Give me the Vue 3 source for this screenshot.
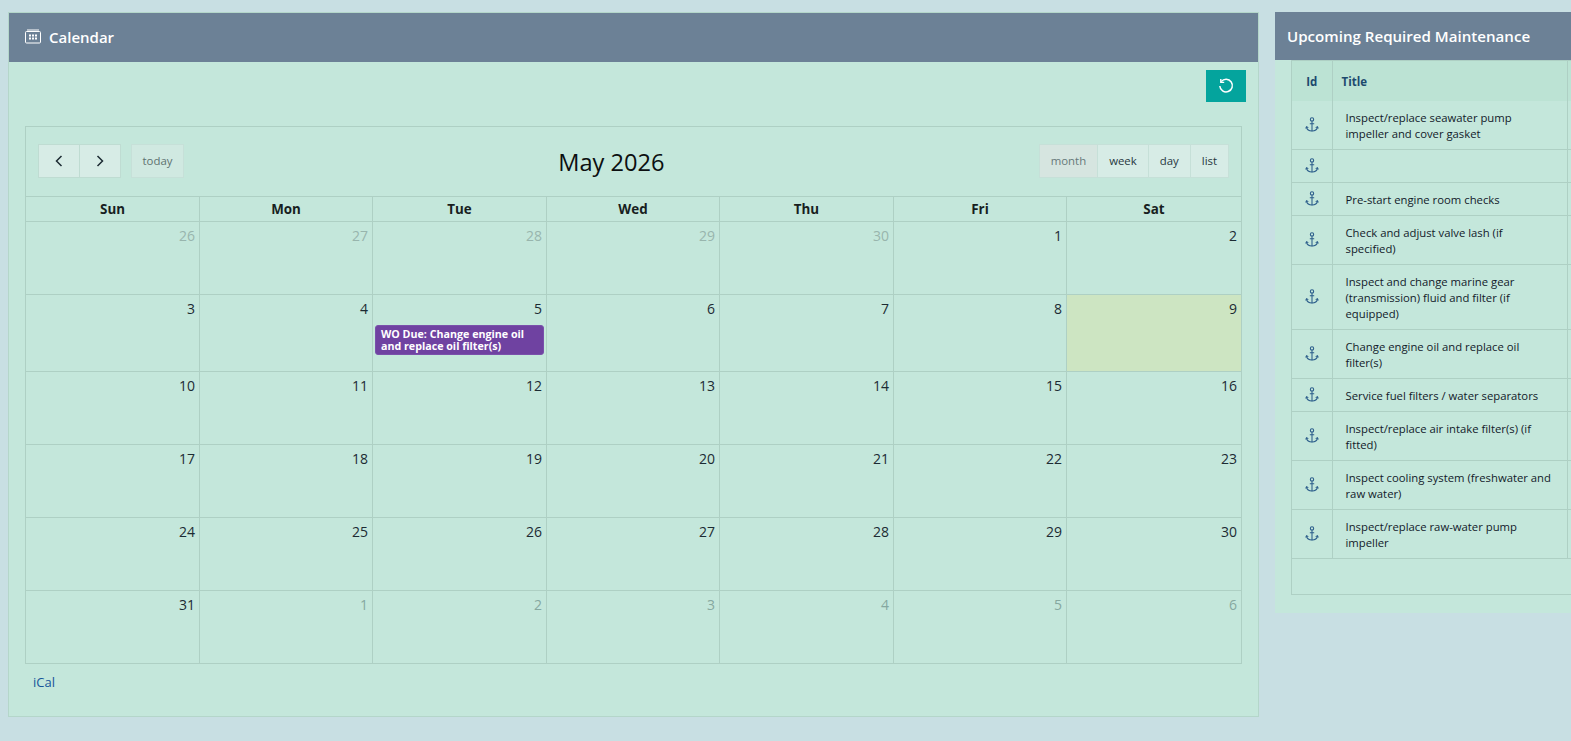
<template>
  <div class="page">
    <section class="card calendar-card">
      <header class="card-header">
        <svg class="cal-icon" viewBox="0 0 16 15" width="16" height="15" fill="none" stroke="#fff" stroke-width="1">
          <rect x="0.5" y="2.500" width="15" height="11.500" rx="1" />
          <path d="M3 0v2.500M5 0v2.500M7 0v2.500M9 0v2.500M11 0v2.500M13 0v2.500" />
          <path d="M4 6.500h8.500M4 9.500h8.500M4 12h0" stroke-width="1.800" stroke-dasharray="2 1" />
        </svg>
        <h2>Calendar</h2>
      </header>
      <div class="card-body">
        <div class="actions">
          <button class="refresh-btn" aria-label="Refresh">
            <svg viewBox="0 0 16 16" width="16" height="16" fill="none" stroke="#fff" stroke-width="1.500">
              <path d="M3.200 3.600A6.300 6.300 0 1 1 1.800 8" />
              <path d="M2.800 1v3.400h3.400" stroke-width="1.400" />
            </svg>
          </button>
        </div>
        <div class="calendar">
          <div class="toolbar">
            <div class="toolbar-left">
              <div class="btn-group">
                <button class="fc-btn nav-btn" aria-label="Previous">
                  <svg viewBox="0 0 10 14" width="10" height="14" fill="none" stroke="#1c2b33" stroke-width="1.500"><path d="M7.500 2 2.500 7l5 5" /></svg>
                </button>
                <button class="fc-btn nav-btn" aria-label="Next">
                  <svg viewBox="0 0 10 14" width="10" height="14" fill="none" stroke="#1c2b33" stroke-width="1.500"><path d="M2.500 2l5 5-5 5" /></svg>
                </button>
              </div>
              <button class="fc-btn today-btn">today</button>
            </div>
            <h1 class="month-title">May 2026</h1>
            <div class="btn-group view-group">
              <button
                v-for="v in views"
                :key="v"
                class="fc-btn"
                :class="{ active: v === 'month' }"
              >{{ v }}</button>
            </div>
          </div>
          <div class="week-head">
            <div v-for="d in dayNames" :key="d" class="head-cell">{{ d }}</div>
          </div>
          <div v-for="(week, i) in weeks" :key="i" class="week" :class="{ tall: i === 1 }">
            <div
              v-for="day in week"
              :key="day.key"
              class="day"
              :class="{ muted: day.other, past: day.past, today: day.today }"
            >
              <span class="day-num">{{ day.n }}</span>
              <div v-if="day.event" class="event">{{ day.event }}</div>
            </div>
          </div>
        </div>
        <a class="ical" href="#">iCal</a>
      </div>
    </section>

    <section class="card maint-card">
      <header class="card-header maint-header">
        <h2>Upcoming Required Maintenance</h2>
      </header>
      <div class="maint-body">
        <div class="table-wrap">
          <table>
            <thead>
              <tr>
                <th class="col-id">Id</th>
                <th class="col-title">Title</th>
                <th class="col-rest"></th>
              </tr>
            </thead>
            <tbody>
              <tr v-for="(t, i) in tasks" :key="i">
                <td class="col-id">
                  <svg class="anchor" viewBox="0 0 16 18" width="14" height="16" fill="none" stroke="#2a5c8a" stroke-width="1.200">
                    <circle cx="8" cy="2.600" r="1.900" />
                    <path d="M8 4.500v11.500M5.500 7.500h5" />
                    <path d="M1.800 11.500c.4 2.600 3 4.400 6.200 4.400s5.800-1.800 6.200-4.400" />
                    <path d="M.8 13l1-2 2 1M15.200 13l-1-2-2 1" />
                  </svg>
                </td>
                <td class="task-title">{{ t }}</td>
                <td class="col-rest"></td>
              </tr>
            </tbody>
          </table>
        </div>
      </div>
    </section>
  </div>
</template>

<script setup>
const views = ['month', 'week', 'day', 'list']
const dayNames = ['Sun', 'Mon', 'Tue', 'Wed', 'Thu', 'Fri', 'Sat']

const buildWeeks = () => {
  const prevDays = [26, 27, 28, 29, 30]
  const cells = prevDays.map((n) => ({ n, other: true, past: true, key: 'p' + n }))
  for (let n = 1; n <= 31; n++) {
    cells.push({ n, key: 'c' + n, today: n === 9 })
  }
  for (let n = 1; n <= 6; n++) {
    cells.push({ n, other: true, key: 'n' + n })
  }
  cells.find((c) => c.key === 'c5').event = 'WO Due: Change engine oil and replace oil filter(s)'
  const out = []
  for (let i = 0; i < cells.length; i += 7) out.push(cells.slice(i, i + 7))
  return out
}

const weeks = buildWeeks()

const tasks = [
  'Inspect/replace seawater pump impeller and cover gasket',
  '',
  'Pre-start engine room checks',
  'Check and adjust valve lash (if specified)',
  'Inspect and change marine gear (transmission) fluid and filter (if equipped)',
  'Change engine oil and replace oil filter(s)',
  'Service fuel filters / water separators',
  'Inspect/replace air intake filter(s) (if fitted)',
  'Inspect cooling system (freshwater and raw water)',
  'Inspect/replace raw-water pump impeller'
]
</script>

<style>
html,
body {
  margin: 0;
  height: 100%;
  overflow: hidden;
  background: #c8dfe3;
}
</style>

<style scoped>
.page {
  display: flex;
  align-items: flex-start;
  gap: 16px;
  padding: 12px 0 0 8px;
  width: 1600px;
  font-family: "Open Sans", "Noto Sans", sans-serif;
  color: #1c2b33;
}

.card {
  background: #c4e7db;
  box-sizing: border-box;
}

.calendar-card {
  width: 1251px;
  height: 705px;
  border: 1px solid #b4d6ca;
  flex: none;
}

.maint-card {
  width: 320px;
  height: 601px;
  flex: none;
}

.card-header {
  display: flex;
  align-items: center;
  gap: 8px;
  height: 49px;
  padding: 0 16px 2px;
  box-sizing: border-box;
  background: #6c8196;
  color: #fff;
}

.card-header h2 {
  margin: 0;
  font-size: 15px;
  font-weight: 600;
}

.maint-header {
  height: 48px;
  padding: 0 12px;
}

.maint-header h2 {
  font-size: 15.1px;
}

.card-body {
  padding: 8px 12px 0 16px;
}

.actions {
  display: flex;
  justify-content: flex-end;
  height: 56px;
}

.refresh-btn {
  width: 40px;
  height: 32px;
  padding: 0;
  border: none;
  background: #04a49d;
  display: flex;
  align-items: center;
  justify-content: center;
}

.calendar {
  width: 1217px;
  box-sizing: border-box;
  border-top: 1px solid #aed0c4;
  border-left: 1px solid #aed0c4;
  border-bottom: 1px solid #aed0c4;
}

.toolbar {
  display: flex;
  align-items: center;
  justify-content: space-between;
  height: 69px;
  padding: 0 12px 2px;
  border-right: 1px solid #aed0c4;
  box-sizing: border-box;
}

.toolbar-left {
  display: flex;
  gap: 10px;
}

.btn-group {
  display: flex;
}

.fc-btn {
  height: 34px;
  box-sizing: border-box;
  padding: 0 11px;
  border: 1px solid #c6e0d8;
  background: #d7ece6;
  font-family: inherit;
  font-size: 11.4px;
  color: #27383f;
  margin-left: -1px;
}

.btn-group .fc-btn:first-child {
  margin-left: 0;
}

.nav-btn {
  width: 42px;
  display: flex;
  align-items: center;
  justify-content: center;
  padding: 0;
  border-color: #bfdcd2;
}

.today-btn {
  width: 53px;
  padding: 0;
  margin-left: 0;
  color: #5e7270;
  background: #d0e9e1;
}

.fc-btn.active {
  background: #d6e5e0;
  color: #67797a;
}

.month-title {
  margin: 2px 0 0;
  font-size: 23.6px;
  font-weight: 400;
  color: #0c0f10;
}

.week-head,
.week {
  display: grid;
  grid-template-columns: 174px 173px 174px 173px 174px 173px 175px;
}

.head-cell {
  height: 25px;
  box-sizing: border-box;
  border-top: 1px solid #aed0c4;
  border-right: 1px solid #aed0c4;
  text-align: center;
  font-size: 13.4px;
  font-weight: 700;
  line-height: 25px;
  color: #181f1f;
}

.week {
  height: 73px;
}

.week.tall {
  height: 77px;
}

.day {
  box-sizing: border-box;
  border-top: 1px solid #aed0c4;
  border-right: 1px solid #aed0c4;
  padding: 4px 0 0 2px;
  display: flex;
  flex-direction: column;
  align-items: flex-end;
  font-size: 14px;
  line-height: 19px;
}

.day-num {
  padding-right: 4px;
}

.day.muted {
  color: #86a8a0;
}

.day.past {
  color: #98b5ad;
}

.day.today {
  background: #cde5c2;
}

.event {
  align-self: stretch;
  margin: 7px 2px 0 0;
  padding: 2px 5px;
  background: #6f42a1;
  border: 1px solid #7a50ab;
  border-radius: 3px;
  color: #fff;
  font-size: 10.7px;
  font-weight: 700;
  line-height: 12px;
}

.ical {
  display: inline-block;
  margin: 9px 0 0 8px;
  font-size: 13px;
  line-height: 18px;
  color: #17559a;
  text-decoration: none;
}

.maint-body {
  padding: 0 0 0 16px;
}

.table-wrap {
  width: 300px;
  height: 535px;
  box-sizing: border-box;
  border-top: 1px solid #aed0c4;
  border-left: 1px solid #aed0c4;
  border-bottom: 1px solid #aed0c4;
}

table {
  width: 100%;
  border-collapse: collapse;
  table-layout: fixed;
}

thead tr {
  background: #bce3d4;
  height: 40px;
}

th {
  box-sizing: border-box;
  font-size: 11.5px;
  font-weight: 700;
  color: #1d4a6e;
  text-align: left;
  padding: 0;
}

th.col-id {
  text-align: center;
}

th.col-title {
  padding-left: 9px;
}

.col-id {
  width: 40px;
  text-align: center;
  border-right: 1px solid #aed0c4;
}

.col-title,
.task-title {
  width: 235px;
  border-right: 1px solid #aed0c4;
}

tbody td {
  border-bottom: 1px solid #aed0c4;
  padding: 0;
  height: 32px;
}

.task-title {
  padding: 9px 12px 7px 13px !important;
  box-sizing: border-box;
  font-size: 11.3px;
  line-height: 16px;
  color: #121a2a;
}

.task-title:empty {
  padding: 0 !important;
}

.anchor {
  display: block;
  margin: 0 auto;
}
</style>
